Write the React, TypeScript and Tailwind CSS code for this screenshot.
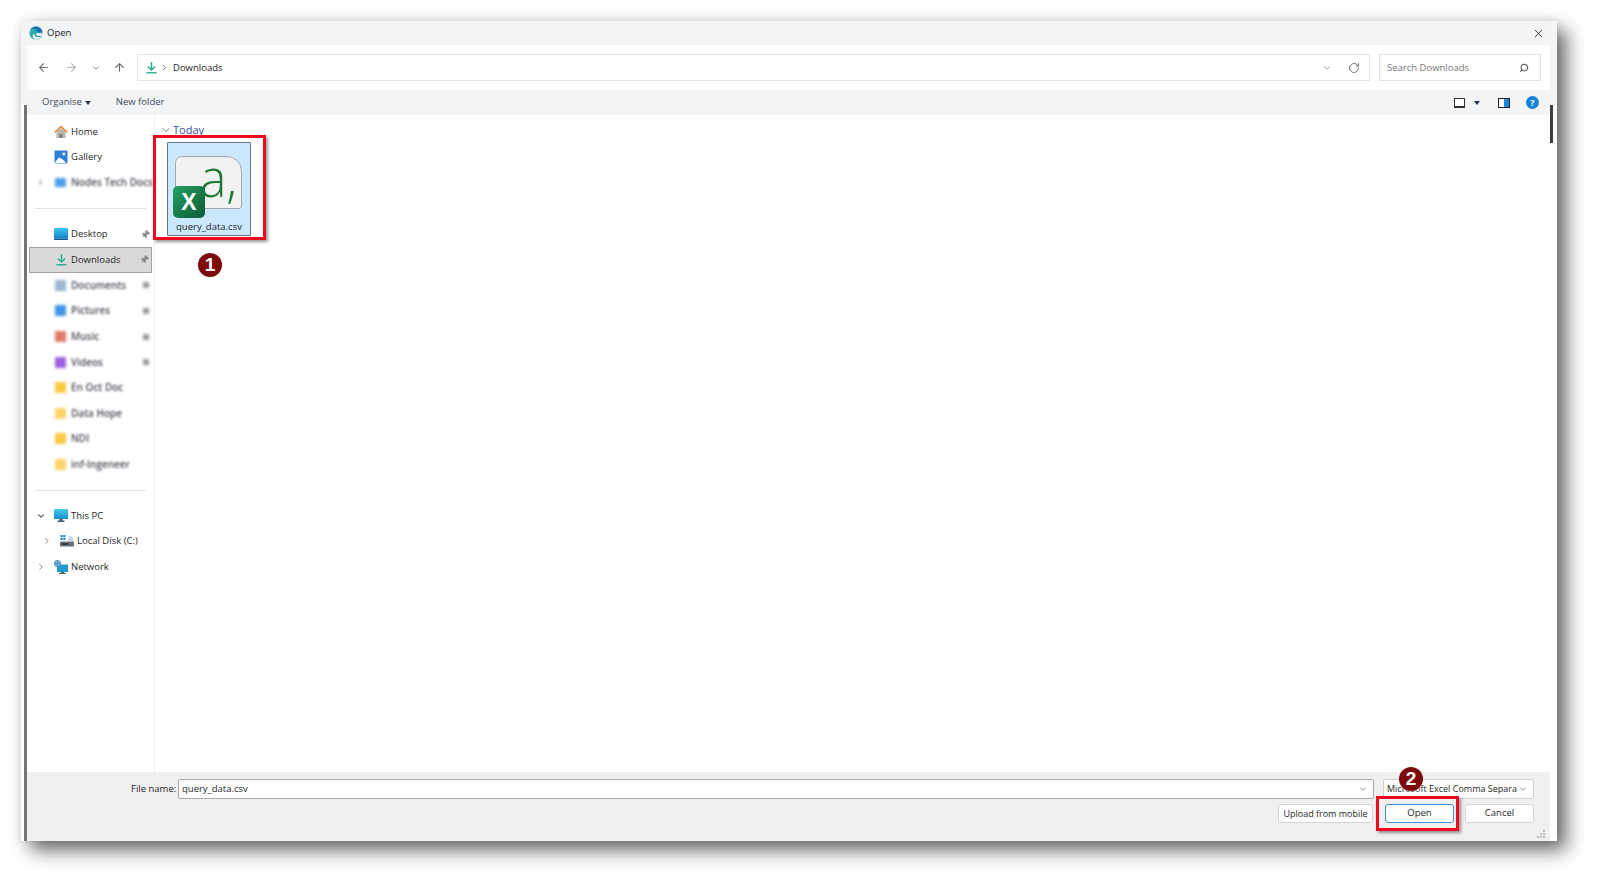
import React from 'react';
import { ArrowLeft, ArrowRight, ArrowUp, ChevronDown, ChevronRight, Pin, RotateCw, Search, X } from 'lucide-react';

const EdgeLogo = () => (
  <svg width="14" height="14" viewBox="0 0 16 16">
    <defs>
      <linearGradient id="edgeA" x1="0" y1="0" x2="1" y2="1">
        <stop offset="0" stopColor="#35c1a0" />
        <stop offset="1" stopColor="#1b7fc4" />
      </linearGradient>
    </defs>
    <circle cx="8" cy="8" r="7.5" fill="url(#edgeA)" />
    <path d="M15.5 8c0-4-3.4-7.5-7.5-7.5C5 .5 2.600 2.200 1.500 4.500 3 3.200 5 2.800 6.800 3.300 9 4 10.200 5.600 9.800 6.900H15.400z" fill="#1c6fb5" />
    <path d="M6 8.500c0 2.500 2.500 4.500 5.500 4 1-.2 2-.6 2.800-1.300-1 2.600-3.600 4.300-6.300 4.300C5 15.500 3.500 12.500 4.500 10 4.900 9 5.400 8.700 6 8.500z" fill="#fff" opacity=".85" />
    <path d="M8 8.200h7.400c0 .9-.2 1.800-.6 2.600-1.400 1-3.800 1-5.500 0C8.400 10.200 8 9.200 8 8.200z" fill="#fff" />
  </svg>
);

const DownloadIcon = ({ size = 13 }: { size?: number }) => (
  <svg width={size} height={size} viewBox="0 0 14 14" fill="none" stroke="#1fae8c" strokeWidth="1.5">
    <path d="M7 1v8.500M3.200 6 7 9.700 10.800 6" />
    <path d="M1.500 12.700h11" />
  </svg>
);

const HomeIcon = () => (
  <svg width="14" height="14" viewBox="0 0 14 14">
    <path d="M2.500 7v6h9V7L7 3z" fill="#b9b4ae" />
    <path d="M5.500 9h3v4h-3z" fill="#7f7a76" />
    <path d="M.8 7.300 7 1.500l6.200 5.800" fill="none" stroke="#e8873a" strokeWidth="1.600" />
  </svg>
);

const GalleryIcon = () => (
  <svg width="14" height="14" viewBox="0 0 14 14">
    <rect x=".5" y=".5" width="13" height="13" rx="1" fill="#2f7fd6" />
    <circle cx="9.800" cy="4" r="1.400" fill="#fff" />
    <path d="M.5 13 5 7.500c2 .5 5 2.500 7 5.500z" fill="#fff" />
  </svg>
);

const DesktopIcon = () => (
  <svg width="14" height="12" viewBox="0 0 14 12">
    <defs>
      <linearGradient id="deskA" x1="0" y1="0" x2="0" y2="1">
        <stop offset="0" stopColor="#3ec6ec" />
        <stop offset="1" stopColor="#1483c7" />
      </linearGradient>
    </defs>
    <rect width="14" height="10.500" rx=".8" fill="url(#deskA)" />
    <rect y="10.500" width="14" height="1.500" fill="#0d5c96" />
  </svg>
);

const MonitorIcon = () => (
  <svg width="14" height="13" viewBox="0 0 14 13">
    <defs>
      <linearGradient id="pcA" x1="0" y1="0" x2="0" y2="1">
        <stop offset="0" stopColor="#45cdea" />
        <stop offset="1" stopColor="#1590c9" />
      </linearGradient>
    </defs>
    <rect width="14" height="10" rx=".6" fill="url(#pcA)" />
    <path d="M5.500 10h3v1.500h2V13h-7v-1.500h2z" fill="#40606e" />
  </svg>
);

const DiskIcon = () => (
  <svg width="14" height="12" viewBox="0 0 14 12">
    <rect x=".5" y="0" width="2.200" height="2.200" fill="#2a8ad8" />
    <rect x="3.300" y="0" width="2.200" height="2.200" fill="#2a8ad8" />
    <rect x=".5" y="2.800" width="2.200" height="2.200" fill="#2a8ad8" />
    <rect x="3.300" y="2.800" width="2.200" height="2.200" fill="#2a8ad8" />
    <path d="M9 1c3 0 4.500 2 4.500 5H8z" fill="#c5d6e2" />
    <rect x="0" y="6.500" width="14" height="5" rx=".6" fill="#6b7278" />
    <rect x="1.500" y="8.200" width="7" height="1.600" fill="#2b2f33" />
  </svg>
);

const NetworkIcon = () => (
  <svg width="14" height="14" viewBox="0 0 14 14">
    <rect x="3" y="4.500" width="11" height="7.500" rx=".5" fill="#1f9bcf" />
    <path d="M7 12h3v1h2v1H5v-1h2z" fill="#3f6070" />
    <circle cx="3.500" cy="3.500" r="3.200" fill="#7cc0e8" stroke="#2d6f9e" strokeWidth=".6" />
    <path d="M.5 3.500h6M3.500.5v6" stroke="#2d6f9e" strokeWidth=".5" />
  </svg>
);

const PlainRow = ({ icon, label, active, pin }: { icon: React.ReactNode; label: string; active?: boolean; pin?: boolean }) => (
  <div className="h-[25.6px] flex items-center pr-[2px]">
    <div className={`flex items-center h-[26px] w-full ml-[2px] ${active ? 'bg-[#d9d9d9] border border-[#a3a3a3] pl-[24px]' : 'pl-[25px]'}`}>
      <span className="w-[14px] flex justify-center shrink-0">{icon}</span>
      <span className="ml-[3px] text-[#1f1f1f]">{label}</span>
      {pin && <Pin size={9} className="ml-auto mr-[2px] text-[#8a8a8a] fill-[#8a8a8a] rotate-45" />}
    </div>
  </div>
);

const BlurRow = ({ color, label, pin }: { color: string; label: string; pin?: boolean }) => (
  <div className="h-[25.6px] flex items-center pl-[28px] pr-[4px]">
    <span className={`w-[11px] h-[11px] blur-[1.5px] shrink-0 ${color}`} />
    <span className="ml-[5px] blur-[1.2px] text-[#4f4a56] font-semibold text-[10px] whitespace-nowrap">{label}</span>
    {pin && <span className="ml-auto mr-[1px] w-[6px] h-[6px] bg-[#9a9a9a] blur-[1.5px]" />}
  </div>
);

const Sidebar = () => (
  <div className="w-[128px] shrink-0 border-r border-[#f0f0f0] pt-[4px] text-[9.5px]">
    <PlainRow icon={<HomeIcon />} label="Home" />
    <PlainRow icon={<GalleryIcon />} label="Gallery" />
    <div className="h-[25.6px] flex items-center pl-[12px] overflow-hidden">
      <span className="w-[3px] h-[5px] bg-[#cfcfcf] blur-[1px]" />
      <span className="ml-[13px] w-[11px] h-[9px] bg-[#4f9ff0] blur-[1.5px] shrink-0" />
      <span className="ml-[5px] blur-[1.2px] text-[#4f4a56] font-semibold text-[10px] whitespace-nowrap">Nodes Tech Docs</span>
    </div>
    <div className="h-[25.6px] flex items-center pl-[8px] pr-[8px]">
      <div className="h-[1px] w-full bg-[#e3e3e3]" />
    </div>
    <PlainRow icon={<DesktopIcon />} label="Desktop" pin />
    <PlainRow icon={<DownloadIcon />} label="Downloads" active pin />
    <BlurRow color="bg-[#9db6d4]" label="Documents" pin />
    <BlurRow color="bg-[#3f95e8]" label="Pictures" pin />
    <BlurRow color="bg-[#e2786a]" label="Music" pin />
    <BlurRow color="bg-[#9a62e0]" label="Videos" pin />
    <BlurRow color="bg-[#fbc944]" label="En Oct Doc" />
    <BlurRow color="bg-[#fbd468]" label="Data Hope" />
    <BlurRow color="bg-[#fbc944]" label="NDI" />
    <BlurRow color="bg-[#fbd468]" label="inf-Ingeneer" />
    <div className="h-[25.6px] flex items-center pl-[8px] pr-[8px]">
      <div className="h-[1px] w-full bg-[#e3e3e3]" />
    </div>
    <div className="h-[25.6px] flex items-center pl-[9px]">
      <ChevronDown size={10} strokeWidth={2.5} className="text-[#333]" />
      <span className="ml-[8px]"><MonitorIcon /></span>
      <span className="ml-[3px] text-[#1f1f1f]">This PC</span>
    </div>
    <div className="h-[25.6px] flex items-center pl-[15px]">
      <ChevronRight size={10} className="text-[#777]" />
      <span className="ml-[8px]"><DiskIcon /></span>
      <span className="ml-[3px] text-[#1f1f1f]">Local Disk (C:)</span>
    </div>
    <div className="h-[25.6px] flex items-center pl-[9px]">
      <ChevronRight size={10} className="text-[#777]" />
      <span className="ml-[8px]"><NetworkIcon /></span>
      <span className="ml-[3px] text-[#1f1f1f]">Network</span>
    </div>
  </div>
);

const FileTile = () => (
  <div className="w-[84px] h-[94px] bg-[#cce8ff] border border-[#66727c] rounded-[1px] flex flex-col items-center relative">
    <div className="mt-[13px] ml-[-1px] w-[67px] h-[53px] bg-[#f2f2f2] border border-[#a8a8a8] rounded-tl-[7px] rounded-bl-[3px] rounded-br-[3px] rounded-tr-[15px]" />
    <span className="absolute left-[32px] top-[-7px] font-['Open_Sans'] font-light text-[#1c7a33] text-[54px] leading-[80px] scale-x-[0.92] origin-left whitespace-nowrap">a,</span>
    <div className="absolute left-[5px] top-[43px] w-[32px] h-[32px] rounded-[5px] bg-gradient-to-br from-[#23a163] to-[#0c5c35] flex items-center justify-center text-white font-bold text-[23px] leading-none font-['Liberation_Sans']">
      X
    </div>
    <span className="mt-auto mb-[1px] text-[9.5px] text-[#1f1f1f] leading-[14px]">query_data.csv</span>
  </div>
);

const App = () => {
  return (
    <div className="w-[1599px] h-[883px] bg-white pt-[21px] pl-[21px] overflow-hidden font-['Open_Sans',sans-serif]">
      <div className="relative w-[1536px] h-[820px] bg-[#f2f4f6] flex flex-col shadow-[9px_9px_18px_rgba(0,0,0,0.6),0_0_10px_rgba(0,0,0,0.08)]">
        {/* title bar */}
        <div className="h-[24px] flex items-center pl-[8px] pr-[12px] text-[9.5px] text-[#222]">
          <EdgeLogo />
          <span className="ml-[4px] mt-[1px]">Open</span>
          <X size={13} strokeWidth={1.5} className="ml-auto text-[#222]" />
        </div>

        <div className="flex-1 flex min-h-0">
          <div className="w-[6px] shrink-0 flex flex-col bg-white">
            <div className="h-[60px] bg-[#f2f4f6]" />
            <div className="flex-1 flex justify-end"><div className="w-[3px] bg-[#757575]" /></div>
          </div>

          <div className="flex-1 flex flex-col min-w-0">
            {/* address bar */}
            <div className="h-[45px] bg-white flex items-center shrink-0">
              <div className="w-[110px] shrink-0 flex items-center text-[#6b6b6b]">
                <ArrowLeft size={13} className="ml-[10px]" />
                <ArrowRight size={13} className="ml-[15px] text-[#b5b5b5]" />
                <ChevronDown size={10} className="ml-[13px]" />
                <ArrowUp size={13} className="ml-[12px]" />
              </div>
              <div className="w-[1233px] h-[27px] border border-[#e2e2e2] flex items-center pl-[7px] pr-[9px] text-[9.5px] text-[#222]">
                <DownloadIcon />
                <ChevronRight size={9} className="ml-[2px] text-[#666]" />
                <span className="ml-[4px] mt-[1px]">Downloads</span>
                <ChevronDown size={10} className="ml-auto text-[#888]" />
                <RotateCw size={12} className="ml-[16px] text-[#777]" />
              </div>
              <div className="ml-[9px] w-[162px] h-[27px] border border-[#e2e2e2] flex items-center pl-[7px] pr-[11px] text-[9.5px] text-[#777]">
                <span className="mt-[1px]">Search Downloads</span>
                <Search size={10} strokeWidth={2.5} className="ml-auto text-[#555] -scale-x-100" />
              </div>
            </div>

            {/* command bar */}
            <div className="h-[25px] bg-[#f3f4f6] flex items-center shrink-0 text-[9.5px] text-[#3b4a5e]">
              <span className="ml-[15px]">Organise</span>
              <span className="ml-[3px] w-0 h-0 border-x-[3px] border-x-transparent border-t-[4px] border-t-[#2b3c52]" />
              <span className="ml-[25px]">New folder</span>
              <span className="ml-auto w-[11px] h-[10px] border border-[#333] border-b-2 bg-white" />
              <span className="ml-[9px] w-0 h-0 border-x-[3px] border-x-transparent border-t-[4px] border-t-[#1f3350]" />
              <span className="ml-[18px] w-[12px] h-[10px] border border-[#222] bg-gradient-to-r from-white from-50% to-[#1f86d8] to-50%" />
              <span className="ml-[16px] mr-[11px] w-[13px] h-[13px] rounded-full bg-[#1683d8] text-white text-[9px] font-bold leading-[13px] text-center">?</span>
            </div>

            {/* body */}
            <div className="flex-1 flex bg-white min-h-0">
              <Sidebar />
              <div className="flex-1 pl-[12px] pt-[8px]">
                <div className="flex items-center h-[14px] -ml-[7px]">
                  <ChevronDown size={12} className="text-[#777]" />
                  <span className="ml-[1px] text-[11px] text-[#3a4ca8]">Today</span>
                </div>
                <div className="mt-[5px]">
                  <FileTile />
                </div>
              </div>
            </div>

            {/* footer */}
            <div className="h-[69px] bg-[#f0f0f0] shrink-0 flex flex-col text-[9.5px] text-[#1f1f1f] pr-[16px] pt-[7px] relative">
              <div className="flex items-center h-[20px]">
                <span className="ml-[104px] w-[44px] text-right whitespace-nowrap">File name:</span>
                <div className="ml-[3px] w-[1196px] h-[20px] bg-white border border-[#aaa] rounded-[2px] flex items-center pl-[3px] pr-[5px]">
                  <span className="mt-[1px]">query_data.csv</span>
                  <ChevronDown size={10} className="ml-auto text-[#777]" />
                </div>
                <div className="ml-[9px] w-[151px] h-[20px] bg-white border border-[#d0d0d0] rounded-[2px] flex items-center pl-[3px] pr-[5px] whitespace-nowrap overflow-hidden">
                  <span className="text-[9px]">Microsoft Excel Comma Separa</span>
                  <ChevronDown size={10} className="ml-auto text-[#777] shrink-0" />
                </div>
              </div>
              <div className="flex justify-end items-center mt-[5px]">
                <button className="w-[95px] h-[19px] bg-white border border-[#d4d4d4] rounded-[3px] whitespace-nowrap text-[9px]">Upload from mobile</button>
                <button className="ml-[12px] w-[69px] h-[19px] bg-white border border-[#3a8fd8] rounded-[3px]">Open</button>
                <button className="ml-[11px] w-[69px] h-[19px] bg-white border border-[#d4d4d4] rounded-[3px]">Cancel</button>
              </div>
              <div className="absolute right-[5px] bottom-[3px] grid grid-cols-3 gap-[1px]">
                <span /><span /><span className="w-[2px] h-[2px] bg-[#bdbdbd]" />
                <span /><span className="w-[2px] h-[2px] bg-[#bdbdbd]" /><span className="w-[2px] h-[2px] bg-[#bdbdbd]" />
                <span className="w-[2px] h-[2px] bg-[#bdbdbd]" /><span className="w-[2px] h-[2px] bg-[#bdbdbd]" /><span className="w-[2px] h-[2px] bg-[#bdbdbd]" />
              </div>
            </div>
          </div>

          <div className="w-[7px] shrink-0 flex flex-col bg-white">
            <div className="h-[60px] bg-[#f2f4f6]" />
            <div className="w-[3px] h-[38px] bg-[#3c3c3c]" />
          </div>
        </div>

        {/* callouts */}
        <div className="absolute left-[132px] top-[114px] w-[113px] h-[105px] border-[3px] border-[#ee0a1e] shadow-[2px_2px_3px_rgba(0,0,0,0.4)]" />
        <div className="absolute left-[177px] top-[232px] w-[24px] h-[24px] rounded-full bg-[#7d0a0a] text-white font-bold text-[19px] leading-[24px] text-center font-['Liberation_Sans']">1</div>
        <div className="absolute left-[1355px] top-[775px] w-[83px] h-[35px] border-[3px] border-[#ee0a1e] shadow-[2px_2px_3px_rgba(0,0,0,0.4)]" />
        <div className="absolute left-[1378px] top-[746px] w-[24px] h-[24px] rounded-full bg-[#7d0a0a] text-white font-bold text-[19px] leading-[24px] text-center font-['Liberation_Sans']">2</div>
      </div>
    </div>
  );
};

export default App;
